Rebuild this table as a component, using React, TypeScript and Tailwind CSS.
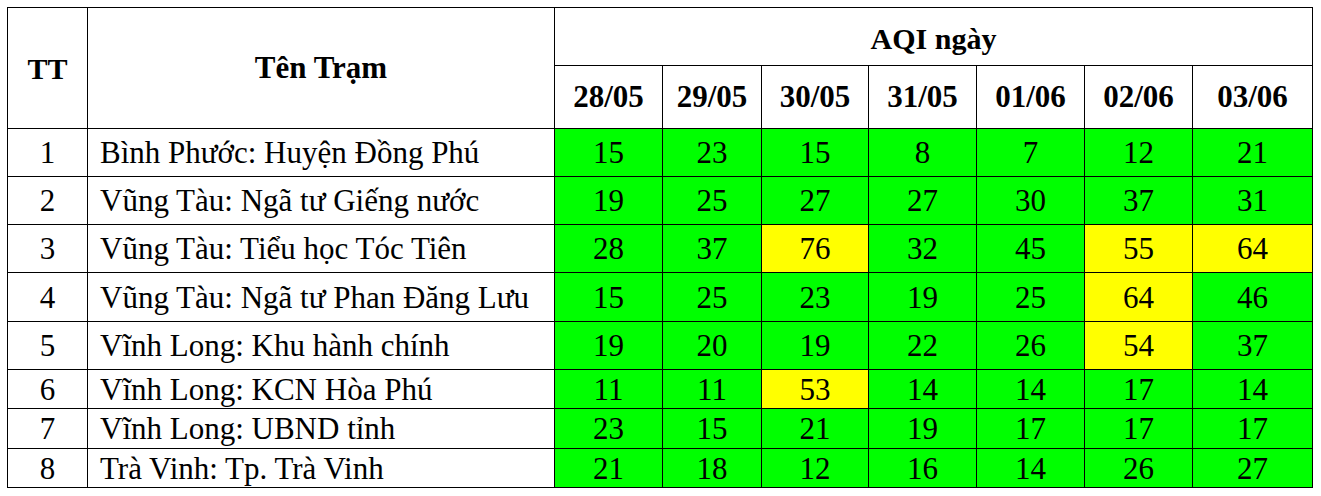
const days = ["28/05", "29/05", "30/05", "31/05", "01/06", "02/06", "03/06"];
const dayWidths = ["w-[108px]", "w-[99px]", "w-[107px]", "w-[108px]", "w-[108px]", "w-[108px]", "w-[120px]"];

const rows = [
  { name: "Bình Phước: Huyện Đồng Phú", aqi: [15, 23, 15, 8, 7, 12, 21], h: "h-[48px]" },
  { name: "Vũng Tàu: Ngã tư Giếng nước", aqi: [19, 25, 27, 27, 30, 37, 31], h: "h-[48px]" },
  { name: "Vũng Tàu: Tiểu học Tóc Tiên", aqi: [28, 37, 76, 32, 45, 55, 64], h: "h-[48px]" },
  { name: "Vũng Tàu: Ngã tư Phan Đăng Lưu", aqi: [15, 25, 23, 19, 25, 64, 46], h: "h-[49px]" },
  { name: "Vĩnh Long: Khu hành chính", aqi: [19, 20, 19, 22, 26, 54, 37], h: "h-[48px]" },
  { name: "Vĩnh Long: KCN Hòa Phú", aqi: [11, 11, 53, 14, 14, 17, 14], h: "h-[39px]" },
  { name: "Vĩnh Long: UBND tỉnh", aqi: [23, 15, 21, 19, 17, 17, 17], h: "h-[40px]" },
  { name: "Trà Vinh: Tp. Trà Vinh", aqi: [21, 18, 12, 16, 14, 26, 27], h: "h-[39px]" },
];

export default function App() {
  return (
    <div className="min-h-screen bg-white pl-[7px] pt-[7px] font-[family-name:'Liberation_Serif',serif] text-black">
      <table className="table-fixed border-collapse w-[1306px]">
        <colgroup>
          <col className="w-[80px]" />
          <col className="w-[467px]" />
          {dayWidths.map((w, i) => (
            <col key={i} className={w} />
          ))}
        </colgroup>
        <thead>
          <tr className="h-[58px]">
            <th rowSpan={2} className="border border-black text-[30px] font-bold align-middle">
              TT
            </th>
            <th rowSpan={2} className="border border-black text-[31px] font-bold align-middle">
              Tên Trạm
            </th>
            <th colSpan={7} className="border border-black text-[30px] font-bold pt-[4px]">
              AQI ngày
            </th>
          </tr>
          <tr className="h-[63px]">
            {days.map((d) => (
              <th key={d} className="border border-black text-[31px] font-bold">
                {d}
              </th>
            ))}
          </tr>
        </thead>
        <tbody>
          {rows.map((r, i) => (
            <tr key={i} className={r.h}>
              <td className="border border-black text-center text-[31px] leading-none">{i + 1}</td>
              <td className="border border-black pl-[12px] text-[31px] leading-none whitespace-nowrap">{r.name}</td>
              {r.aqi.map((v, j) => (
                <td
                  key={j}
                  className={`border border-black text-center text-[31px] leading-none ${
                    v > 50 ? "bg-[#ffff00]" : "bg-[#00ff00]"
                  }`}
                >
                  {v}
                </td>
              ))}
            </tr>
          ))}
        </tbody>
      </table>
    </div>
  );
}
